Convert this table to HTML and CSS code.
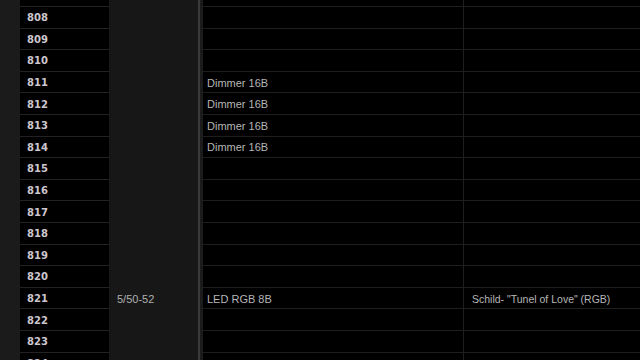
FILE: index.html
```html
<!DOCTYPE html>
<html>
<head>
<meta charset="utf-8">
<link rel="stylesheet" href="styles.css">
</head>
<body>
<div class="table">
  <div class="row"><div class="strip"></div><div class="num">807</div><div class="addr"></div><div class="sep"></div><div class="sep2"></div><div class="type"></div><div class="name"></div></div>
  <div class="row"><div class="strip"></div><div class="num">808</div><div class="addr"></div><div class="sep"></div><div class="sep2"></div><div class="type"></div><div class="name"></div></div>
  <div class="row"><div class="strip"></div><div class="num">809</div><div class="addr"></div><div class="sep"></div><div class="sep2"></div><div class="type"></div><div class="name"></div></div>
  <div class="row"><div class="strip"></div><div class="num">810</div><div class="addr"></div><div class="sep"></div><div class="sep2"></div><div class="type"></div><div class="name"></div></div>
  <div class="row"><div class="strip"></div><div class="num">811</div><div class="addr"></div><div class="sep"></div><div class="sep2"></div><div class="type">Dimmer 16B</div><div class="name"></div></div>
  <div class="row"><div class="strip"></div><div class="num">812</div><div class="addr"></div><div class="sep"></div><div class="sep2"></div><div class="type">Dimmer 16B</div><div class="name"></div></div>
  <div class="row"><div class="strip"></div><div class="num">813</div><div class="addr"></div><div class="sep"></div><div class="sep2"></div><div class="type">Dimmer 16B</div><div class="name"></div></div>
  <div class="row"><div class="strip"></div><div class="num">814</div><div class="addr"></div><div class="sep"></div><div class="sep2"></div><div class="type">Dimmer 16B</div><div class="name"></div></div>
  <div class="row"><div class="strip"></div><div class="num">815</div><div class="addr"></div><div class="sep"></div><div class="sep2"></div><div class="type"></div><div class="name"></div></div>
  <div class="row"><div class="strip"></div><div class="num">816</div><div class="addr"></div><div class="sep"></div><div class="sep2"></div><div class="type"></div><div class="name"></div></div>
  <div class="row"><div class="strip"></div><div class="num">817</div><div class="addr"></div><div class="sep"></div><div class="sep2"></div><div class="type"></div><div class="name"></div></div>
  <div class="row"><div class="strip"></div><div class="num">818</div><div class="addr"></div><div class="sep"></div><div class="sep2"></div><div class="type"></div><div class="name"></div></div>
  <div class="row"><div class="strip"></div><div class="num">819</div><div class="addr"></div><div class="sep"></div><div class="sep2"></div><div class="type"></div><div class="name"></div></div>
  <div class="row"><div class="strip"></div><div class="num">820</div><div class="addr"></div><div class="sep"></div><div class="sep2"></div><div class="type"></div><div class="name"></div></div>
  <div class="row"><div class="strip"></div><div class="num">821</div><div class="addr">5/50-52</div><div class="sep"></div><div class="sep2"></div><div class="type">LED RGB 8B</div><div class="name">Schild- "Tunel of Love" (RGB)</div></div>
  <div class="row"><div class="strip"></div><div class="num">822</div><div class="addr"></div><div class="sep"></div><div class="sep2"></div><div class="type"></div><div class="name"></div></div>
  <div class="row"><div class="strip"></div><div class="num">823</div><div class="addr"></div><div class="sep"></div><div class="sep2"></div><div class="type"></div><div class="name"></div></div>
  <div class="row"><div class="strip"></div><div class="num">824</div><div class="addr"></div><div class="sep"></div><div class="sep2"></div><div class="type"></div><div class="name"></div></div>
</div>
</body>
</html>
```
FILE: styles.css
```css
html, body {
  margin: 0;
  padding: 0;
  background: #000;
  overflow: hidden;
  width: 640px;
  height: 360px;
}
.table {
  margin-top: -14.6px;
  display: flex;
  flex-direction: column;
  font-family: "Liberation Sans", Arial, sans-serif;
  font-size: 11px;
  color: #b6b6b6;
}
.row {
  display: grid;
  grid-template-columns: 20px 89px 89px 2px 3px 260px 1fr;
  height: 21.6px;
}
.row > div {
  display: flex;
  align-items: center;
  box-sizing: border-box;
  white-space: nowrap;
  padding-top: 1px;
}
.strip { background: #1b1b1b; }
.num {
  background: #000;
  border-bottom: 1px solid #222;
  padding-left: 7px;
  font-family: "DejaVu Sans", sans-serif;
  font-weight: bold;
  font-size: 10px;
  color: #cdc6ce;
}
.addr {
  background: #171717;
  padding-left: 8px;
  color: #b0b0b0;
}
.sep { background: #3a3a3a; }
.sep2 { background: #1c1c1c; }
.type {
  background: #000;
  border-bottom: 1px solid #1e1e1e;
  padding-left: 4px;
}
.name {
  background: #000;
  border-bottom: 1px solid #1e1e1e;
  border-left: 1px solid #1e1e1e;
  padding-left: 8px;
  font-size: 10.5px;
}
```
